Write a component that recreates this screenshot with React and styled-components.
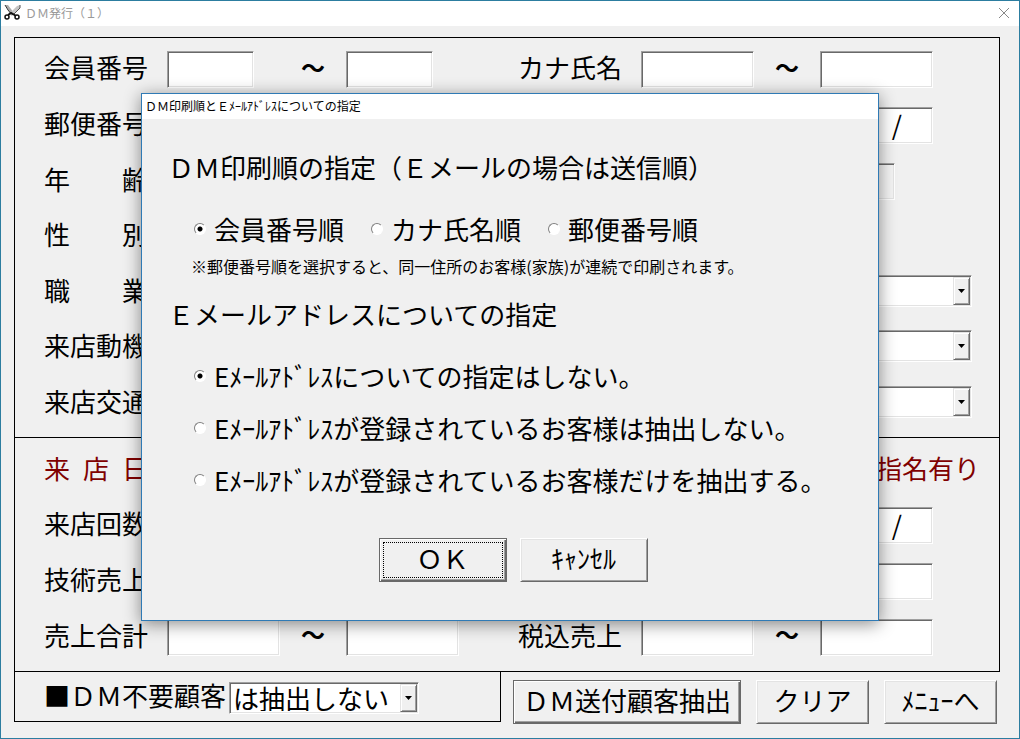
import React from 'react';
import styled, { createGlobalStyle, css } from 'styled-components';

const GlobalStyle = createGlobalStyle`
    * {
        box-sizing: border-box;
    }
    body {
        margin: 0;
        background-color: #f0f0f0;
    }
    body, input, select, button {
        font-family: "Noto Sans CJK JP", "Liberation Sans", sans-serif;
        font-size: 26px;
        line-height: 36px;
        color: #000;
    }
`;

const sunken = css`
    border: 1px solid;
    border-color: #a0a0a0 #fff #fff #a0a0a0;
    box-shadow: inset 1px 1px 0 #696969, inset -1px -1px 0 #e3e3e3;
`;

const Window = styled.main`
    position: relative;
    display: flex;
    flex-direction: column;
    min-height: 100vh;
    min-width: 1020px;
    border: 1px solid #2c7da0;
    background-color: #f0f0f0;
`;

const TitleBar = styled.header`
    display: flex;
    align-items: center;
    gap: 4px;
    height: 25px;
    padding: 0 9px 2px 3px;
    background-color: #fff;
    color: #999;
    font-size: 12px;
    line-height: 16px;
`;

const TitleText = styled.h1`
    flex: 1;
    margin: 0;
    font-size: inherit;
    font-weight: normal;
`;

const CloseButton = styled.button`
    display: flex;
    padding: 0;
    border: 0;
    background: none;
    cursor: pointer;
`;

const Form = styled.form`
    flex: 1;
    display: flex;
    flex-direction: column;
    padding: 11px 19px 14px 13px;
`;

const Section = styled.section`
    flex: ${({ $rows }) => $rows} 1 auto;
    display: grid;
    grid-auto-rows: minmax(52px, 1fr);
    padding: 4px 17px 6px 29px;
    border: 1px solid #000;
    & + & {
        border-top: 0;
    }
`;

const Row = styled.div`
    display: grid;
    grid-template-columns: 474px 1fr;
    align-items: center;
    color: ${({ $accent }) => ($accent ? '#800000' : '#000')};
`;

const Cell = styled.div`
    display: grid;
    grid-template-columns: 123px 113px 66px 1fr;
    align-items: center;
`;

const Label = styled.label`
    padding-bottom: 5px;
    white-space: pre;
`;

const Tilde = styled.span`
    padding-bottom: 6px;
    text-align: center;
    font-size: 24px;
    font-weight: bold;
`;

const TextBox = styled.input`
    ${sunken}
    width: ${({ $short }) => ($short ? '87px' : '113px')};
    height: 37px;
    padding: 0 2px;
    background-color: #fff;
`;

const DateBox = styled(TextBox)`
    grid-column: 4;
    padding: 0 30px 4px 2px;
    text-align: right;
`;

const AmountBox = styled(TextBox)`
    grid-column: 4;
`;

const AgeBox = styled(TextBox)`
    grid-column: 4;
    width: 75px;
    &:disabled {
        background-color: #f4f4f4;
    }
`;

const SelectWrap = styled.div`
    ${sunken}
    position: relative;
    grid-column: 2 / -1;
    width: ${({ $wide }) => ($wide ? '331px' : '190px')};
    height: 32px;
    margin-bottom: ${({ $wide }) => ($wide ? '3px' : '0')};
    padding: 2px;
    background-color: #fff;
`;

const SelectBox = styled.select`
    appearance: none;
    display: block;
    width: 100%;
    height: 100%;
    padding: 0 18px 0 1px;
    border: 0;
    outline: 0;
    background: none;
    line-height: 26px;
`;

const Arrow = styled.span`
    position: absolute;
    top: 1px;
    right: 1px;
    bottom: 1px;
    display: flex;
    align-items: center;
    justify-content: center;
    width: 17px;
    border: 1px solid;
    border-color: #e3e3e3 #696969 #696969 #e3e3e3;
    box-shadow: inset 1px 1px 0 #fff, inset -1px -1px 0 #a0a0a0;
    background-color: #f0f0f0;
    pointer-events: none;
`;

const Visit = styled.div`
    padding: 0 2px 5px 0;
    text-align: right;
`;

const Footer = styled.footer`
    display: flex;
    align-items: flex-start;
    gap: 12px;
`;

const ExcludeBox = styled.div`
    display: flex;
    align-items: center;
    gap: 3px;
    flex: 1;
    height: 50px;
    padding: 2px 0 0 29px;
    border: 1px solid #000;
    border-top: 0;
`;

const FooterButtons = styled.div`
    display: flex;
    gap: 15px;
    padding: 8px 3px 0 0;
`;

const PushButton = styled.button`
    width: ${({ $width }) => $width};
    height: 44px;
    padding: 0 0 5px;
    white-space: nowrap;
    background-color: #f0f0f0;
    border: 1px solid;
    border-color: #fff #696969 #696969 #fff;
    box-shadow: inset 1px 1px 0 #e3e3e3, inset -1px -1px 0 #a0a0a0;
    cursor: pointer;
    ${({ $primary }) => $primary && css`
        border-color: #696969;
        box-shadow: inset 1px 1px 0 #fff, inset -1px -1px 0 #696969, inset -2px -2px 0 #a0a0a0;
    `}
`;

const OkButton = styled(PushButton)`
    outline: 1px dotted #000;
    outline-offset: -5px;
`;

const DialogLayer = styled.div`
    position: absolute;
    inset: 0;
    display: flex;
    align-items: flex-start;
    justify-content: center;
    padding-top: 93px;
`;

const Dialog = styled.section`
    width: 738px;
    border: 1px solid #2f7ab5;
    background-color: #f0f0f0;
    box-shadow: 0 3px 16px rgba(0, 0, 0, 0.45);
`;

const DialogTitle = styled.h2`
    height: 25px;
    margin: 0;
    padding-left: 3px;
    background-color: #fff;
    font-size: 12px;
    font-weight: normal;
    line-height: 24px;
`;

const DialogBody = styled.div`
    padding: 30px 26px 38px;
`;

const Group = styled.fieldset`
    min-width: 0;
    margin: 0 0 18px;
    padding: 0;
    border: 0;
`;

const Legend = styled.legend`
    padding: 0;
    margin-bottom: 26px;
    white-space: nowrap;
`;

const Options = styled.div`
    display: flex;
    flex-direction: ${({ $column }) => ($column ? 'column' : 'row')};
    gap: ${({ $column }) => ($column ? '16px' : '27px')};
    padding-left: 26px;
`;

const Option = styled.label`
    display: flex;
    align-items: center;
    gap: 8px;
    white-space: nowrap;
`;

const Radio = styled.input`
    appearance: none;
    flex: none;
    width: 12px;
    height: 12px;
    margin: 0;
    border: 1px solid;
    border-color: #808080 #fff #fff #808080;
    border-radius: 50%;
    background-color: #fff;
    &:checked {
        background-image: radial-gradient(circle, #000 2px, transparent 3px);
    }
`;

const Note = styled.p`
    margin: 7px 0 0 23px;
    font-size: 16px;
    line-height: 24px;
    white-space: nowrap;
`;

const DialogButtons = styled.div`
    display: flex;
    justify-content: center;
    gap: 13px;
    margin-top: 40px;
    padding-left: 6px;
`;

function ScissorsIcon() {
    return (
        <svg width="17" height="17" viewBox="0 0 17 17" fill="none" aria-hidden="true">
            <path d="M1 1h3l3 4 3 4-2 2-3-4z" fill="#aaa" />
            <path d="M1 1l3 5 4 5" stroke="#333" />
            <path d="M16 1l-3 1-8 8 3 2 8-8z" fill="#c4c4c4" />
            <path d="M16 1v3l-7 7" stroke="#555" />
            <path d="M4 11l3-2 2 1 3 2" stroke="#111" strokeWidth="2" />
            <ellipse cx="3" cy="13" rx="2" ry="2" stroke="#111" strokeWidth="1.500" />
            <ellipse cx="13" cy="13" rx="2" ry="2" stroke="#111" strokeWidth="1.500" />
        </svg>
    );
}

function Select({ id, label, wide, options = [''] }) {
    return (
        <SelectWrap $wide={wide}>
            <SelectBox id={id} aria-label={label}>
                {options.map((option) => <option key={option}>{option}</option>)}
            </SelectBox>
            <Arrow>
                <svg width="7" height="4" viewBox="0 0 7 4" aria-hidden="true"><path d="M0 0h7L3.500 4z" /></svg>
            </Arrow>
        </SelectWrap>
    );
}

function Range({ id, label, short }) {
    return (
        <Cell>
            <Label htmlFor={id}>{label}</Label>
            <TextBox id={id} $short={short} />
            <Tilde>～</Tilde>
            <TextBox $short={short} aria-label={label} />
        </Cell>
    );
}

function Field({ id, label }) {
    return (
        <Cell>
            <Label htmlFor={id}>{label}</Label>
            <TextBox id={id} />
        </Cell>
    );
}

function Choice({ id, label }) {
    return (
        <Cell>
            <Label htmlFor={id}>{label}</Label>
            <Select id={id} />
        </Cell>
    );
}

const profileChoices = [
    { id: 'job', label: '職　　業' },
    { id: 'motive', label: '来店動機' },
    { id: 'transport', label: '来店交通' },
];

const orders = ['会員番号順', 'カナ氏名順', '郵便番号順'];

const mailRules = [
    'Eﾒｰﾙｱﾄﾞﾚｽについての指定はしない。',
    'Eﾒｰﾙｱﾄﾞﾚｽが登録されているお客様は抽出しない。',
    'Eﾒｰﾙｱﾄﾞﾚｽが登録されているお客様だけを抽出する。',
];

function SortDialog() {
    return (
        <DialogLayer>
            <Dialog role="dialog" aria-labelledby="dialog-title">
                <DialogTitle id="dialog-title">ＤＭ印刷順とＥﾒｰﾙｱﾄﾞﾚｽについての指定</DialogTitle>
                <DialogBody>
                    <Group>
                        <Legend>ＤＭ印刷順の指定（Ｅメールの場合は送信順）</Legend>
                        <Options>
                            {orders.map((text, i) => (
                                <Option key={text}>
                                    <Radio type="radio" name="order" defaultChecked={i === 0} />
                                    {text}
                                </Option>
                            ))}
                        </Options>
                        <Note>※郵便番号順を選択すると、同一住所のお客様(家族)が連続で印刷されます。</Note>
                    </Group>
                    <Group>
                        <Legend>Ｅメールアドレスについての指定</Legend>
                        <Options $column>
                            {mailRules.map((text, i) => (
                                <Option key={text}>
                                    <Radio type="radio" name="mail" defaultChecked={i === 0} />
                                    {text}
                                </Option>
                            ))}
                        </Options>
                    </Group>
                    <DialogButtons>
                        <OkButton type="button" $width="128px" $primary>ＯＫ</OkButton>
                        <PushButton type="button" $width="128px">ｷｬﾝｾﾙ</PushButton>
                    </DialogButtons>
                </DialogBody>
            </Dialog>
        </DialogLayer>
    );
}

function App() {
    return (
        <>
            <GlobalStyle />
            <Window>
                <TitleBar>
                    <ScissorsIcon />
                    <TitleText>ＤＭ発行（１）</TitleText>
                    <CloseButton type="button" aria-label="閉じる">
                        <svg width="12" height="12" viewBox="0 0 12 12" stroke="#888"><path d="M1 1l10 10M11 1L1 11" /></svg>
                    </CloseButton>
                </TitleBar>
                <Form>
                    <Section $rows={7}>
                        <Row>
                            <Range id="member" label="会員番号" short />
                            <Range id="kana" label="カナ氏名" />
                        </Row>
                        <Row>
                            <Field id="zip" label="郵便番号" />
                            <Cell>
                                <DateBox defaultValue="/" aria-label="月日" />
                            </Cell>
                        </Row>
                        <Row>
                            <Field id="age" label="年　　齢" />
                            <Cell>
                                <AgeBox disabled aria-label="年齢" />
                            </Cell>
                        </Row>
                        <Row>
                            <Choice id="sex" label="性　　別" />
                        </Row>
                        {profileChoices.map(({ id, label }) => (
                            <Row key={id}>
                                <Choice id={id} label={label} />
                                <Cell>
                                    <Select wide label={label} />
                                </Cell>
                            </Row>
                        ))}
                    </Section>
                    <Section $rows={4}>
                        <Row $accent>
                            <Label as="span">来&ensp;店&ensp;日</Label>
                            <Visit>指名有り</Visit>
                        </Row>
                        <Row>
                            <Field id="count" label="来店回数" />
                            <Cell>
                                <DateBox defaultValue="/" aria-label="月日" />
                            </Cell>
                        </Row>
                        <Row>
                            <Field id="tech" label="技術売上" />
                            <Cell>
                                <AmountBox aria-label="金額" />
                            </Cell>
                        </Row>
                        <Row>
                            <Range id="total" label="売上合計" />
                            <Range id="taxed" label="税込売上" />
                        </Row>
                    </Section>
                    <Footer>
                        <ExcludeBox>
                            <Label htmlFor="exclude">■ＤＭ不要顧客</Label>
                            <Select id="exclude" options={['は抽出しない']} />
                        </ExcludeBox>
                        <FooterButtons>
                            <PushButton type="button" $width="228px" $primary>ＤＭ送付顧客抽出</PushButton>
                            <PushButton type="button" $width="113px">クリア</PushButton>
                            <PushButton type="button" $width="113px">ﾒﾆｭｰへ</PushButton>
                        </FooterButtons>
                    </Footer>
                </Form>
            </Window>
            <SortDialog />
        </>
    );
}

export default App;
